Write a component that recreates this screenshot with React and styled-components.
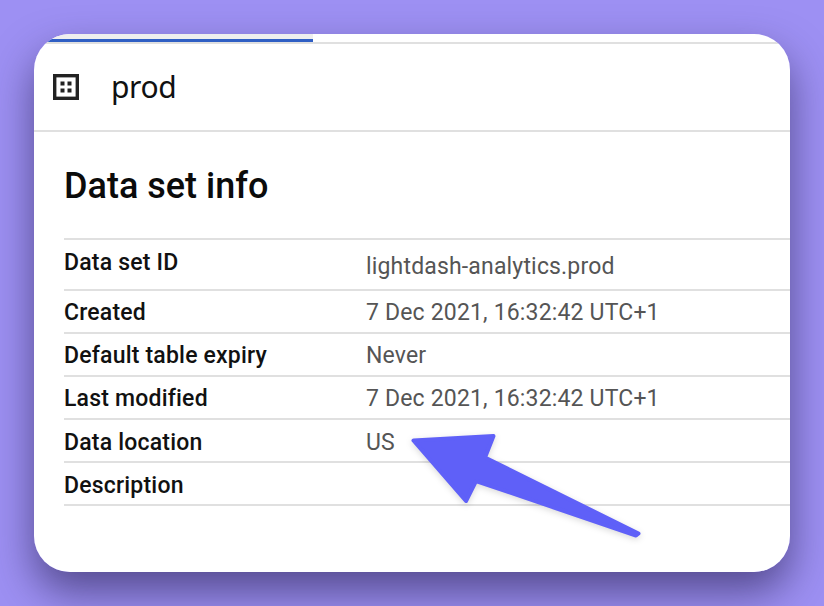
import React from 'react'
import styled, { createGlobalStyle } from 'styled-components'

const GlobalStyle = createGlobalStyle`
  html, body {
    margin: 0;
    padding: 0;
    height: 606px;
    overflow: hidden;
    background: #9d90f3;
    font-family: Roboto, "Liberation Sans", sans-serif;
  }
`

const Page = styled.div`
  width: 824px;
  height: 606px;
  padding: 34px;
  box-sizing: border-box;
`

const Card = styled.div`
  position: relative;
  width: 756px;
  height: 538px;
  background: white;
  border-radius: 36px;
  overflow: hidden;
`

const CardShadow = styled.div`
  border-radius: 36px;
  box-shadow: 0 20px 42px rgba(40, 32, 80, 0.62);
`

const Progress = styled.div`
  height: 5px;
  width: 279px;
  background: #eeeeee;
`

const ProgressBlue = styled.div`
  height: 3px;
  width: 279px;
  background: #2f5fc4;
`

const ProgressTrack = styled.div`
  height: 2px;
  background: #e0e0e0;
`

const Header = styled.div`
  display: flex;
  align-items: center;
  height: 86px;
  padding-left: 19px;
  border-bottom: 2px solid #e0e0e0;
`

const HeaderIcon = styled.svg`
  width: 26px;
  height: 26px;
  margin-right: 33px;
  flex-shrink: 0;
`

const HeaderTitle = styled.div`
  font-family: "Noto Sans", sans-serif;
  font-size: 30px;
  letter-spacing: -0.4px;
  color: #111;
  position: relative;
  top: -1px;
  left: -1px;
`

const Body = styled.div`
  padding: 30px 0 0 30px;
`

const Title = styled.h1`
  margin: 0 0 28px;
  font-size: 36px;
  line-height: 48px;
  font-weight: 500;
  color: #0b0b0b;
`

const Table = styled.div`
  border-top: 2px solid #e0e0e0;
`

const Row = styled.div`
  display: grid;
  grid-template-columns: 302px 1fr;
  align-items: center;
  height: ${({ $tall }) => ($tall ? '49px' : '41px')};
  border-bottom: 2px solid #e0e0e0;
`

const Label = styled.div`
  font-size: 23px;
  font-weight: 500;
  letter-spacing: 0.2px;
  color: #111;
  position: relative;
  top: ${({ $nudge }) => $nudge}px;
`

const Value = styled.div`
  font-size: 23px;
  letter-spacing: 0.17px;
  color: #555;
  position: relative;
  top: ${({ $nudge }) => $nudge}px;
`

const Arrow = styled.svg`
  position: absolute;
  left: 0;
  top: 0;
  width: 824px;
  height: 606px;
  filter: drop-shadow(0 2px 3px rgba(0, 0, 0, 0.15));
`

const rows = [
  { label: 'Data set ID', value: 'lightdash-analytics.prod', tall: true, labelNudge: -2, valueNudge: 2 },
  { label: 'Created', value: '7 Dec 2021, 16:32:42 UTC+1', labelNudge: 1, valueNudge: 1 },
  { label: 'Default table expiry', value: 'Never', labelNudge: 1, valueNudge: 1 },
  { label: 'Last modified', value: '7 Dec 2021, 16:32:42 UTC+1', labelNudge: 1, valueNudge: 1 },
  { label: 'Data location', value: 'US', labelNudge: 2, valueNudge: 2 },
  { label: 'Description', value: '', labelNudge: 2, valueNudge: 2 }
]

const App = () => (
  <Page>
    <GlobalStyle />
    <CardShadow>
      <Card>
        <Progress />
        <ProgressBlue />
        <ProgressTrack />
        <Header>
          <HeaderIcon viewBox="0 0 26 26">
            <rect x="1.7" y="1.7" width="22.6" height="22.6" fill="none" stroke="#222" strokeWidth="3.4" />
            <rect x="7.5" y="7.5" width="4" height="4" fill="#222" />
            <rect x="14.5" y="7.5" width="4" height="4" fill="#222" />
            <rect x="7.5" y="14.5" width="4" height="4" fill="#222" />
            <rect x="14.5" y="14.5" width="4" height="4" fill="#222" />
          </HeaderIcon>
          <HeaderTitle>prod</HeaderTitle>
        </Header>
        <Body>
          <Title>Data set info</Title>
          <Table>
            {rows.map(({ label, value, tall, labelNudge, valueNudge }) => (
              <Row key={label} $tall={tall}>
                <Label $nudge={labelNudge}>{label}</Label>
                <Value $nudge={valueNudge}>{value}</Value>
              </Row>
            ))}
          </Table>
        </Body>
      </Card>
    </CardShadow>
    <Arrow viewBox="0 0 824 606">
      <polygon
        points="413.5,440.5 493.5,436 485,457.5 638.5,533.5 636,535.5 476,481 466,501"
        fill="#5f60f8"
        stroke="#5f60f8"
        strokeWidth="4"
        strokeLinejoin="round"
      />
    </Arrow>
  </Page>
)

export default App
